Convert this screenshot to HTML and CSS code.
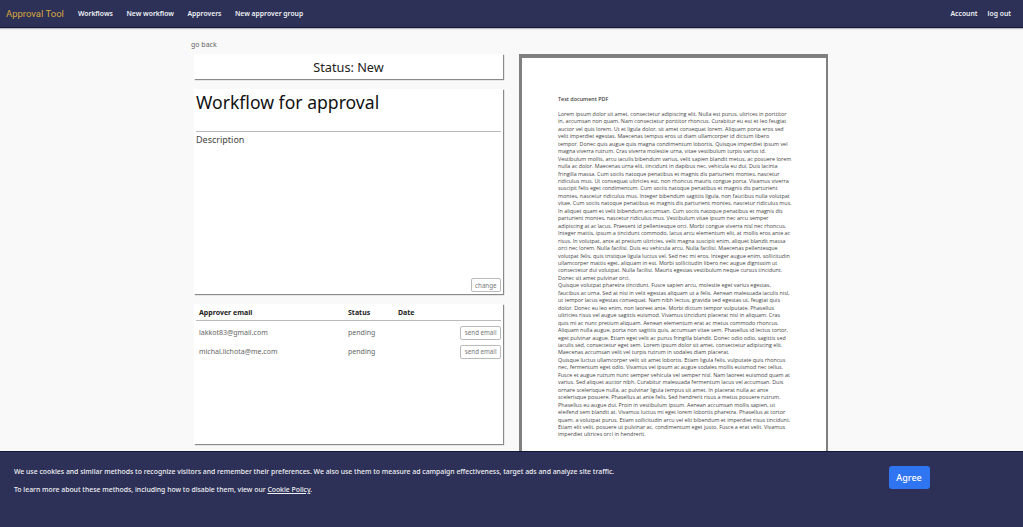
FILE: index.html
```html
<!DOCTYPE html>
<html lang="en">
<head>
    <meta charset="UTF-8">
    <meta name="viewport" content="width=device-width, initial-scale=1.0">
    <title>Approval Tool</title>
    <link rel="stylesheet" href="styles.css">
</head>
<body>
    <!-- Top navigation -->
    <nav class="navbar">
        <a class="brand" href="#">Approval Tool</a>
        <a class="nav-link" href="#">Workflows</a>
        <a class="nav-link" href="#">New workflow</a>
        <a class="nav-link" href="#">Approvers</a>
        <a class="nav-link" href="#">New approver group</a>
        <a class="nav-link nav-right" href="#">Account</a>
        <a class="nav-link" href="#">log out</a>
    </nav>

    <div class="container">
        <a class="back" href="#">go back</a>
        <div class="columns">
            <div class="left">
                <div class="card status">Status: New</div>

                <div class="card workflow">
                    <h1>Workflow for approval</h1>
                    <div class="description">Description</div>
                    <button class="small change">change</button>
                </div>

                <div class="card approvers">
                    <div class="row head">
                        <span class="col-email">Approver email</span>
                        <span class="col-status">Status</span>
                        <span class="col-date">Date</span>
                    </div>
                    <div class="row">
                        <span class="col-email">lakkot83@gmail.com</span>
                        <span class="col-status">pending</span>
                        <span class="col-date"></span>
                        <button class="small">send email</button>
                    </div>
                    <div class="row">
                        <span class="col-email">michal.lichota@me.com</span>
                        <span class="col-status">pending</span>
                        <span class="col-date"></span>
                        <button class="small">send email</button>
                    </div>
                </div>
            </div>

            <!-- PDF preview -->
            <div class="pdf">
                <div class="page">
                    <p class="pdf-title">Test document PDF</p>
                    <p>Lorem ipsum dolor sit amet, consectetur adipiscing elit. Nulla est purus, ultrices in porttitor<br>
                    in, accumsan non quam. Nam consectetur porttitor rhoncus. Curabitur eu est et leo feugiat<br>
                    auctor vel quis lorem. Ut et ligula dolor, sit amet consequat lorem. Aliquam porta eros sed<br>
                    velit imperdiet egestas. Maecenas tempus eros ut diam ullamcorper id dictum libero<br>
                    tempor. Donec quis augue quis magna condimentum lobortis. Quisque imperdiet ipsum vel<br>
                    magna viverra rutrum. Cras viverra molestie urna, vitae vestibulum turpis varius id.<br>
                    Vestibulum mollis, arcu iaculis bibendum varius, velit sapien blandit metus, ac posuere lorem<br>
                    nulla ac dolor. Maecenas urna elit, tincidunt in dapibus nec, vehicula eu dui. Duis lacinia<br>
                    fringilla massa. Cum sociis natoque penatibus et magnis dis parturient montes, nascetur<br>
                    ridiculus mus. Ut consequat ultricies est, non rhoncus mauris congue porta. Vivamus viverra<br>
                    suscipit felis eget condimentum. Cum sociis natoque penatibus et magnis dis parturient<br>
                    montes, nascetur ridiculus mus. Integer bibendum sagittis ligula, non faucibus nulla volutpat<br>
                    vitae. Cum sociis natoque penatibus et magnis dis parturient montes, nascetur ridiculus mus.<br>
                    In aliquet quam et velit bibendum accumsan. Cum sociis natoque penatibus et magnis dis<br>
                    parturient montes, nascetur ridiculus mus. Vestibulum vitae ipsum nec arcu semper<br>
                    adipiscing at ac lacus. Praesent id pellentesque orci. Morbi congue viverra nisl nec rhoncus.<br>
                    Integer mattis, ipsum a tincidunt commodo, lacus arcu elementum elit, at mollis eros ante ac<br>
                    risus. In volutpat, ante at pretium ultricies, velit magna suscipit enim, aliquet blandit massa<br>
                    orci nec lorem. Nulla facilisi. Duis eu vehicula arcu. Nulla facilisi. Maecenas pellentesque<br>
                    volutpat felis, quis tristique ligula luctus vel. Sed nec mi eros. Integer augue enim, sollicitudin<br>
                    ullamcorper mattis eget, aliquam in est. Morbi sollicitudin libero nec augue dignissim ut<br>
                    consectetur dui volutpat. Nulla facilisi. Mauris egestas vestibulum neque cursus tincidunt.<br>
                    Donec sit amet pulvinar orci.<br>
                    Quisque volutpat pharetra tincidunt. Fusce sapien arcu, molestie eget varius egestas,<br>
                    faucibus ac urna. Sed at nisi in velit egestas aliquam ut a felis. Aenean malesuada iaculis nisl,<br>
                    ut tempor lacus egestas consequat. Nam nibh lectus, gravida sed egestas ut, feugiat quis<br>
                    dolor. Donec eu leo enim, non laoreet ante. Morbi dictum tempor vulputate. Phasellus<br>
                    ultricies risus vel augue sagittis euismod. Vivamus tincidunt placerat nisi in aliquam. Cras<br>
                    quis mi ac nunc pretium aliquam. Aenean elementum erat ac metus commodo rhoncus.<br>
                    Aliquam nulla augue, porta non sagittis quis, accumsan vitae sem. Phasellus id lectus tortor,<br>
                    eget pulvinar augue. Etiam eget velit ac purus fringilla blandit. Donec odio odio, sagittis sed<br>
                    iaculis sed, consectetur eget sem. Lorem ipsum dolor sit amet, consectetur adipiscing elit.<br>
                    Maecenas accumsan velit vel turpis rutrum in sodales diam placerat.<br>
                    Quisque luctus ullamcorper velit sit amet lobortis. Etiam ligula felis, vulputate quis rhoncus<br>
                    nec, fermentum eget odio. Vivamus vel ipsum ac augue sodales mollis euismod nec tellus.<br>
                    Fusce et augue rutrum nunc semper vehicula vel semper nisl. Nam laoreet euismod quam at<br>
                    varius. Sed aliquet auctor nibh. Curabitur malesuada fermentum lacus vel accumsan. Duis<br>
                    ornare scelerisque nulla, ac pulvinar ligula tempus sit amet. In placerat nulla ac ante<br>
                    scelerisque posuere. Phasellus at ante felis. Sed hendrerit risus a metus posuere rutrum.<br>
                    Phasellus eu augue dui. Proin in vestibulum ipsum. Aenean accumsan mollis sapien, ut<br>
                    eleifend sem blandit at. Vivamus luctus mi eget lorem lobortis pharetra. Phasellus at tortor<br>
                    quam, a volutpat purus. Etiam sollicitudin arcu vel elit bibendum et imperdiet risus tincidunt.<br>
                    Etiam elit velit, posuere ut pulvinar ac, condimentum eget justo. Fusce a erat velit. Vivamus<br>
                    imperdiet ultrices orci in hendrerit.</p>
                </div>
            </div>
        </div>
    </div>

    <!-- Cookie banner -->
    <div class="cookie">
        <div class="cookie-text">
            <p>We use cookies and similar methods to recognize visitors and remember their preferences. We also use them to measure ad campaign effectiveness, target ads and analyze site traffic.</p>
            <p>To learn more about these methods, including how to disable them, view our <a href="#">Cookie Policy</a>.</p>
        </div>
        <button class="agree">Agree</button>
    </div>
</body>
</html>
```

FILE: styles.css
```css
html, body {
    height: 100%;
}
body {
    font-family: "Noto Sans", "Open Sans", sans-serif;
    background-color: #f9f9f9;
    color: #363636;
    margin: 0;
    overflow: hidden;
}
a {
    text-decoration: none;
}
.navbar {
    display: flex;
    align-items: center;
    height: 27px;
    background-color: #2d3057;
    border-bottom: 1px solid #14163a;
    padding: 0 12px 0 6px;
    box-shadow: 0 1px 1px rgba(0, 0, 0, 0.25);
}
.brand {
    font-family: Roboto, sans-serif;
    font-size: 9.5px;
    color: #d9a93f;
    margin-right: 14px;
}
.nav-link {
    font-family: "Noto Sans", sans-serif;
    font-size: 6.8px;
    font-weight: 600;
    color: #eef0f4;
    margin-right: 13.5px;
}
.nav-right {
    margin-left: auto;
    margin-right: 10px;
}
.navbar .nav-link:last-child {
    margin-right: 0;
}
.container {
    width: 640px;
    margin-left: 191px;
    padding-top: 12px;
}
.back {
    display: block;
    font-size: 7px;
    line-height: 10px;
    color: #666;
    margin-bottom: 4px;
}
.columns {
    display: flex;
    align-items: flex-start;
    gap: 16px;
    padding-left: 3px;
}
.left {
    width: 309px;
    flex-shrink: 0;
}
.card {
    position: relative;
    background-color: white;
    margin-bottom: 10px;
    box-shadow: 1px 1px 1px rgba(0, 0, 0, 0.45);
}
.status {
    height: 25px;
    line-height: 26px;
    text-align: center;
    font-size: 12.7px;
    color: #222;
}
.workflow {
    height: 205px;
    padding: 0 2px;
    box-sizing: border-box;
}
.workflow h1 {
    margin: 0;
    height: 42px;
    border-bottom: 1px solid #bbb;
    font-size: 17.6px;
    line-height: 26px;
    font-weight: 400;
    color: #111;
}
.description {
    font-size: 9px;
    line-height: 14px;
    margin-top: 1px;
    color: #444;
}
.small {
    font-family: "Noto Sans", sans-serif;
    font-size: 6.2px;
    height: 14px;
    padding: 0 3.5px;
    color: #777;
    background-color: white;
    border: 1px solid #bbb;
    border-radius: 2px;
}
.change {
    position: absolute;
    right: 2px;
    bottom: 2px;
}
.approvers {
    height: 140px;
    padding: 0 2px;
    box-sizing: border-box;
}
.row {
    display: flex;
    align-items: center;
    height: 19px;
    padding: 0 0 0 3px;
    font-size: 7px;
    color: #666;
}
.row.head {
    height: 16px;
    margin-bottom: 2px;
    border-bottom: 1px solid #bbb;
    font-weight: 700;
    color: #222;
    font-size: 7px;
}
.col-email {
    width: 149px;
}
.col-status {
    width: 50px;
}
.col-date {
    flex-grow: 1;
}
.pdf {
    width: 309px;
    height: 420px;
    box-sizing: border-box;
    border-style: solid;
    border-color: #808080;
    border-width: 4px 2px 0 3px;
    background-color: white;
    flex-shrink: 0;
}
.page {
    padding: 38px 0 0 36px;
    font-family: "Open Sans", sans-serif;
    font-size: 5.4px;
    line-height: 7.46px;
    color: #444;
}
.page p {
    margin: 0;
    white-space: nowrap;
}
.page .pdf-title {
    font-weight: 600;
    margin-bottom: 7.5px;
}
.cookie {
    position: fixed;
    left: 0;
    right: 0;
    bottom: 0;
    height: 76px;
    box-sizing: border-box;
    background-color: #2d3057;
    border-top: 1px solid #14163a;
    padding: 14px 93.5px 0 14px;
    display: flex;
    justify-content: space-between;
    align-items: flex-start;
    color: #f0f0f4;
}
.cookie-text {
    padding-top: 1px;
    font-size: 6.87px;
    font-weight: 500;
}
.cookie p {
    margin: 0 0 8px;
    line-height: 10px;
}
.cookie a {
    color: #f0f0f4;
    text-decoration: underline;
}
.agree {
    font-family: "Noto Sans", sans-serif;
    font-size: 9px;
    font-weight: 500;
    color: white;
    background-color: #2f74f0;
    border: 0;
    border-radius: 3px;
    width: 41px;
    height: 23px;
}
```
